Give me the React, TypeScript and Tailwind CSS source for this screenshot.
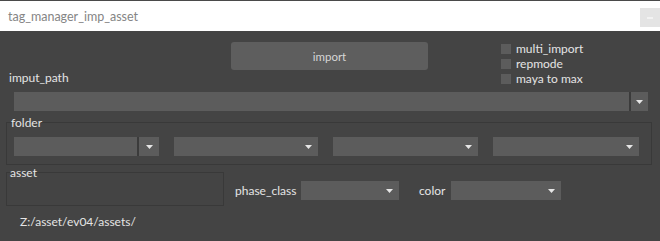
import React from 'react';

const Arrow = () => (
  <svg width="7" height="4" viewBox="0 0 7 4">
    <path d="M0 0h7L3.5 4z" fill="#e6e6e6" />
  </svg>
);

interface ComboProps {
  width: string;
  split?: boolean;
  arrowWidth?: string;
}

const Combo = ({ width, split, arrowWidth = 'w-[20px]' }: ComboProps) => (
  <div className={`flex h-[19px] items-center bg-[#5c5c5c] ${width}`}>
    <div className="flex-1" />
    {split && <div className="h-full w-[2px] bg-[#3b3b3b]" />}
    <div className={`flex justify-center ${arrowWidth}`}>
      <Arrow />
    </div>
  </div>
);

const Check = ({ label }: { label: string }) => (
  <div className="flex h-[15px] items-center gap-[5px]">
    <div className="h-[10px] w-[10px] bg-[#5c5c5c]" />
    <span>{label}</span>
  </div>
);

const App = () => {
  return (
    <div
      className="flex h-[241px] w-[660px] flex-col overflow-hidden bg-[#444444] text-[12px] leading-[14px] text-[#e4e4e4]"
      style={{ fontFamily: 'Lato, "Noto Sans", sans-serif' }}
    >
      {/* title bar */}
      <div className="flex h-[31px] border-t border-[#4a4a4a] bg-white">
        <span className="pl-[8px] pt-[9px] text-[12.5px] text-[#858585]">
          tag_manager_imp_asset
        </span>
        <div className="ml-auto mt-[7px] flex h-[19px] w-[20px] items-center justify-center bg-[#e4e4e4]">
          <div className="h-[2px] w-[6px] bg-[#f2f2f2]" />
        </div>
      </div>

      {/* import + options */}
      <div className="flex h-[61px]">
        <div className="flex w-[231px] items-end pb-[7px] pl-[9px]">imput_path</div>
        <button className="mt-[11px] flex h-[28px] w-[197px] items-center justify-center rounded-[3px] bg-[#5e5e5e] pt-[1px] text-[11.5px] text-[#d6d6d6]">
          import
        </button>
        <div className="ml-[73px] mt-[10px] flex flex-col">
          <Check label="multi_import" />
          <Check label="repmode" />
          <Check label="maya to max" />
        </div>
      </div>

      <div className="pl-[14px]">
        <Combo width="w-[634px]" split arrowWidth="w-[17px]" />
      </div>

      {/* folder */}
      <div className="ml-[6px] mt-[11px] w-[646px] border border-[#393939] pb-[8px] pl-[7px]">
        <div className="-ml-[3px] -mt-[7px]">folder</div>
        <div className="mt-[7px] flex gap-[15px]">
          <Combo width="w-[145px]" split />
          <Combo width="w-[144px]" />
          <Combo width="w-[145px]" />
          <Combo width="w-[146px]" />
        </div>
      </div>

      {/* asset / phase / color */}
      <div className="mt-[7px] flex">
        <div className="ml-[6px] h-[34px] w-[218px] border border-[#393939] pl-[3px]">
          <div className="-mt-[7px]">asset</div>
        </div>
        <div className="ml-[11px] mt-[9px] flex h-[19px] items-center">
          <span className="w-[66px]">phase_class</span>
          <Combo width="w-[98px]" />
          <span className="ml-[20px] w-[32px]">color</span>
          <Combo width="w-[110px]" />
        </div>
      </div>

      <div className="mt-[9px] pl-[20px]">Z:/asset/ev04/assets/</div>
    </div>
  );
};

export default App;
